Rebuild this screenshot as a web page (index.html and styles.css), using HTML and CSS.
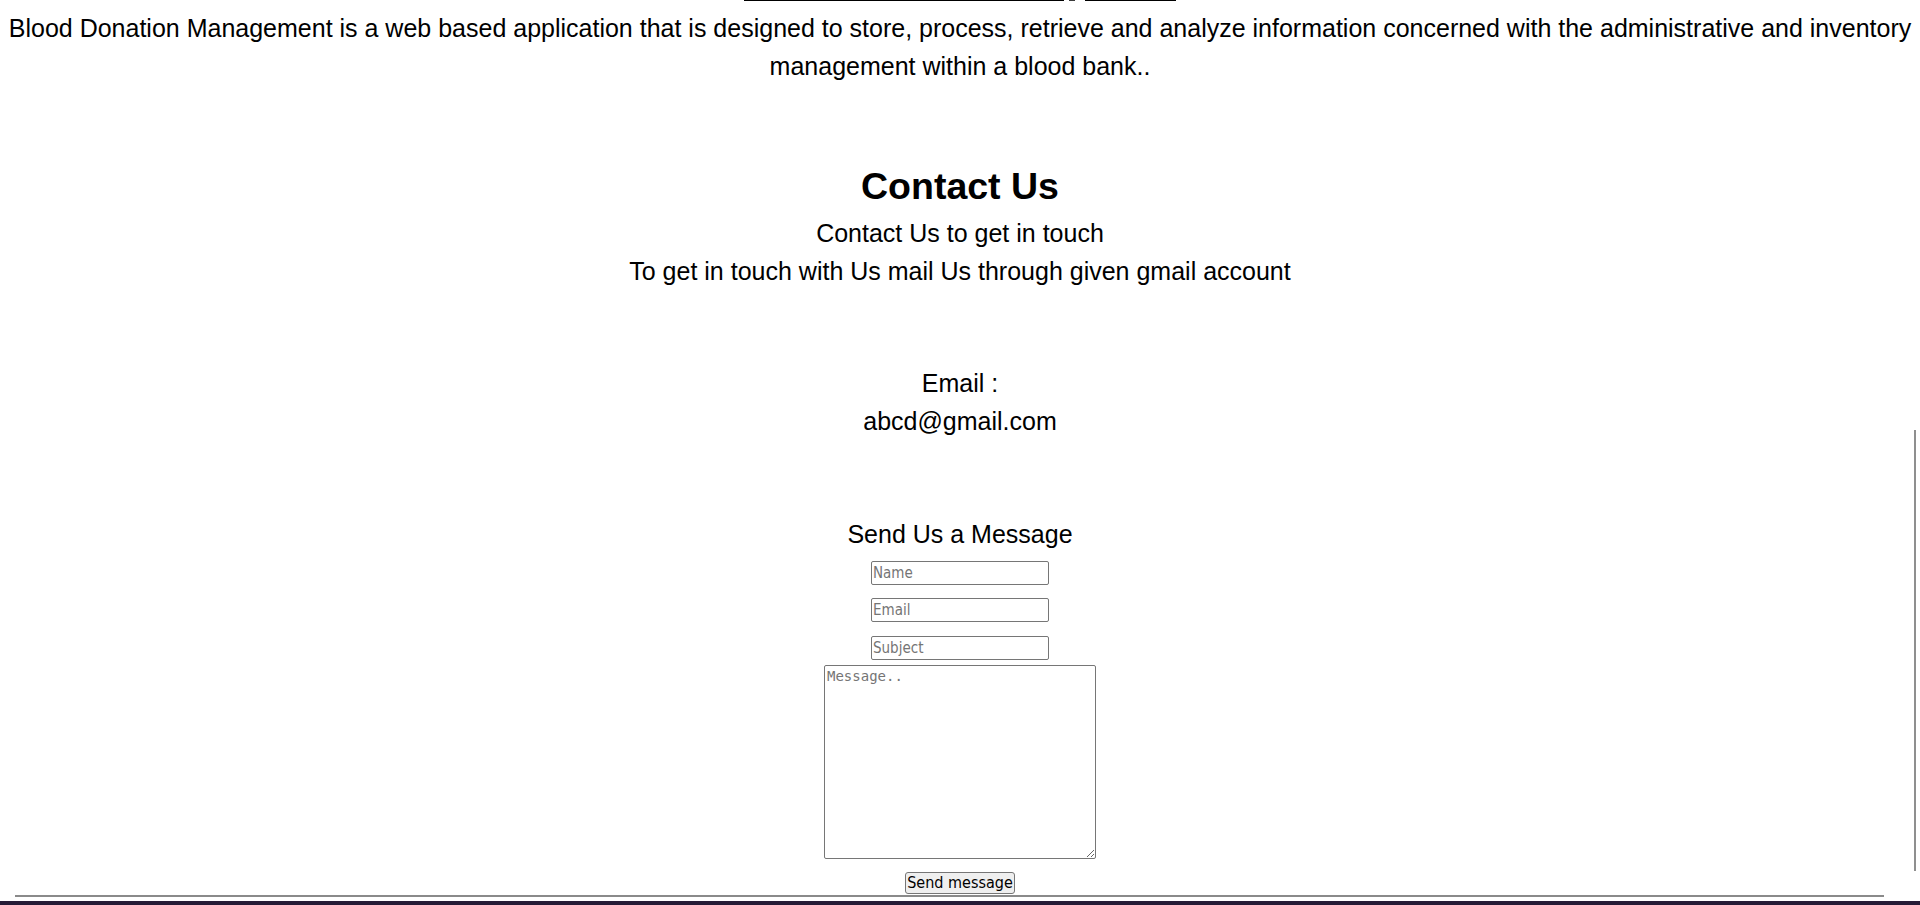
FILE: index.html
```html
<!DOCTYPE html>
<html lang="en">
<head>
<meta charset="utf-8">
<title>Blood Donation Management - Contact</title>
<link rel="stylesheet" href="styles.css">
</head>
<body>
<div class="cutoff" aria-hidden="true">
  <span class="ul ul-a"></span>
  <span class="desc"></span>
  <span class="ul ul-b"></span>
</div>
<p class="about">Blood Donation Management is a web based application that is designed to store, process, retrieve and analyze information concerned with the administrative and inventory management within a blood bank..</p>

<section class="contact">
  <h1 class="title">Contact Us</h1>
  <p class="line">Contact Us to get in touch</p>
  <p class="line">To get in touch with Us mail Us through given gmail account</p>

  <div class="email">
    <p class="line">Email :</p>
    <p class="line">abcd@gmail.com</p>
  </div>

  <p class="line send-title">Send Us a Message</p>
  <form class="form">
    <input class="field f-name" type="text" placeholder="Name">
    <input class="field f-email" type="text" placeholder="Email">
    <input class="field f-subject" type="text" placeholder="Subject">
    <textarea class="message" placeholder="Message.."></textarea>
    <button class="send" type="button">Send message</button>
  </form>
</section>

<div class="rule"></div>
<div class="footer-bar"></div>

<div class="scroll-thumb" aria-hidden="true"></div>
</body>
</html>
```

FILE: styles.css
```css
html, body {
  margin: 0;
  padding: 0;
  background: #ffffff;
}

body {
  font-family: "Liberation Sans", Arial, sans-serif;
  color: #000;
  font-size: 25px;
  line-height: 38px;
  overflow: hidden;
  height: 905px;
}

.cutoff {
  display: flex;
  justify-content: center;
  height: 1px;
}

.cutoff .ul {
  display: block;
  height: 1px;
  background: #000;
}

.ul-a { width: 320px; }
.ul-b { width: 91px; }

.cutoff .desc {
  display: block;
  width: 6px;
  height: 1px;
  margin: 0 10px 0 5px;
  background: #3a3a3a;
}

.about {
  margin: 8px 0 0;
  padding: 0 8px;
  text-align: center;
}

.contact {
  display: flex;
  flex-direction: column;
  align-items: center;
  text-align: center;
}

.title {
  margin: 80px 0 6px;
  font-size: 37.5px;
  line-height: 43px;
  font-weight: bold;
}

.line {
  margin: 0;
}

.email {
  margin-top: 74px;
}

.send-title {
  margin-top: 75px;
}

.form {
  display: flex;
  flex-direction: column;
  align-items: center;
  margin-top: 8px;
}

.field {
  box-sizing: border-box;
  width: 178px;
  height: 24px;
  padding: 1px 1px;
  border: 1px solid #767676;
  border-radius: 2px;
  font-family: "DejaVu Sans Condensed", "DejaVu Sans", sans-serif;
  font-size: 15px;
  color: #000;
  background: #fff;
}

.field::placeholder {
  color: #757575;
}

.f-name { margin-bottom: 13px; }
.f-email { margin-bottom: 14px; }
.f-subject { margin-bottom: 5px; }

.message {
  box-sizing: border-box;
  width: 272px;
  height: 194px;
  padding: 2px;
  border: 1px solid #767676;
  border-radius: 2px;
  font-family: "DejaVu Sans Mono", "Liberation Mono", monospace;
  font-size: 14px;
  line-height: 17px;
  resize: both;
  margin: 0;
}

.message::placeholder {
  color: #757575;
}

.send {
  box-sizing: border-box;
  height: 22px;
  margin-top: 13px;
  padding: 0 1px;
  border: 1px solid #767676;
  border-radius: 3px;
  background: #efefef;
  font-family: "DejaVu Sans Condensed", "DejaVu Sans", sans-serif;
  font-size: 16px;
  line-height: 18px;
  white-space: nowrap;
  color: #000;
}

.rule {
  height: 2px;
  margin: 1px 36px 0 15px;
  background: #8a8a8a;
}

.footer-bar {
  height: 4px;
  margin-top: 4px;
  background: #251b36;
}

.scroll-thumb {
  position: fixed;
  left: 1914px;
  top: 430px;
  width: 2px;
  height: 441px;
  background: #8f8f8f;
}
```
